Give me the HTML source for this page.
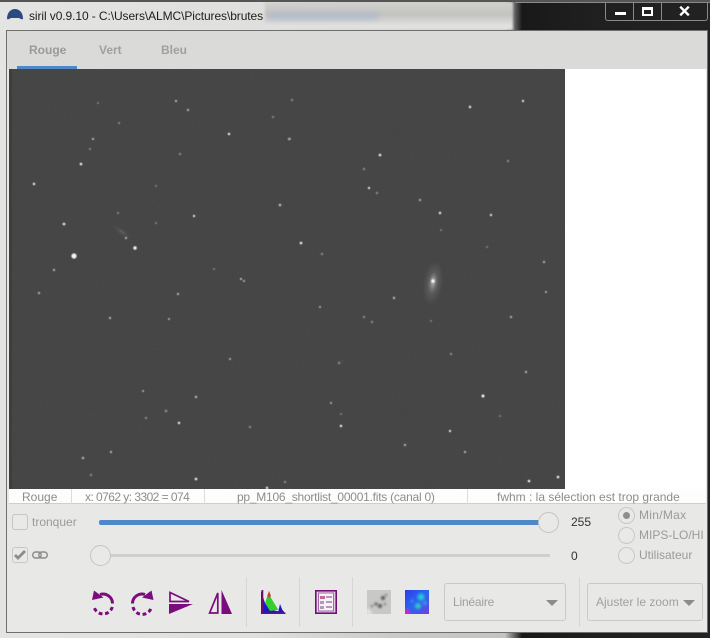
<!DOCTYPE html>
<html><head><meta charset="utf-8"><style>
html,body{margin:0;padding:0;width:710px;height:638px;overflow:hidden;background:#1c1c1c}
*{box-sizing:border-box}
.a{position:absolute}
body{font-family:"Liberation Sans",sans-serif;position:relative}
.t{position:absolute;white-space:nowrap;line-height:14px}
.st{font-size:12px;color:#8d8d8d;top:490px}
.sep{position:absolute;width:1px;top:577px;height:50px;background:#d6d6d5}
.dd{position:absolute;top:583px;height:38px;border:1px solid #c9c9c8;border-radius:3px;background:#e8e8e7}
.arrow{position:absolute;width:0;height:0;border-left:6px solid transparent;border-right:6px solid transparent;border-top:6px solid #8c8c8c;top:16px}
.radio{position:absolute;left:618px;width:17px;height:17px;border:1px solid #c8c8c7;border-radius:50%;background:#e9e9e8}
.knob{position:absolute;width:21px;height:21px;border:1px solid #c4c4c3;border-radius:50%;background:#e9e9e8}
.cb{position:absolute;left:12px;width:16px;height:16px;border:1px solid #c6c6c5;border-radius:3px;background:#e9e9e8}
</style></head><body>
<!-- title bar -->
<div class="a" style="left:0;top:0;width:710px;height:638px;background:linear-gradient(90deg,#e4e4e2 0,#dfdfdd 260px,#c9c9c6 400px,#c4c4c1 505px,#191919 522px,#202020 600px,#222 710px)"></div>
<div class="a" style="left:265px;top:2px;width:248px;height:28px;background:linear-gradient(180deg,#d2d2cf,#c2c2bf 45%,#e2e2df 85%,#ddd);filter:blur(1px)"></div>
<div class="a" style="left:268px;top:13px;width:110px;height:6px;background:#a8b8d0;filter:blur(3px);opacity:.8"></div>
<div class="a" style="left:0;top:0;width:710px;height:2px;background:#555"></div>
<div class="a" style="left:515px;top:2px;width:195px;height:1px;background:#8a8a8a"></div>
<svg class="a" style="left:7px;top:8px" width="16" height="13" viewBox="0 0 16 13"><path d="M0 11C0 4 4 1 8 1s8 3 8 10c-2 1-3-1-4-1H4c-1 0-2 2-4 1z" fill="#2b4a80"/></svg>
<div class="t" style="left:29px;top:9px;font-size:12px;letter-spacing:-.09px;color:#1d1d1d">siril v0.9.10 - C:\Users\ALMC\Pictures\brutes</div>
<!-- window buttons -->
<div class="a" style="left:605px;top:2px;width:103px;height:19px;border:1px solid #8a8a8a;border-top:0;border-radius:0 0 3px 3px"></div>
<div class="a" style="left:633px;top:2px;width:1px;height:18px;background:#8a8a8a"></div>
<div class="a" style="left:661px;top:2px;width:1px;height:18px;background:#8a8a8a"></div>
<div class="a" style="left:615px;top:12px;width:11px;height:3px;background:#fff"></div>
<div class="a" style="left:642px;top:7px;width:11px;height:9px;border:2px solid #fff;border-top-width:3px"></div>
<svg class="a" style="left:679px;top:6px" width="11" height="10" viewBox="0 0 11 10"><path d="M1.200 .7L9.800 9.300M9.800 .7L1.200 9.300" stroke="#fff" stroke-width="2.400"/></svg>
<!-- client -->
<div class="a" style="left:6px;top:30px;width:702px;height:603px;border:1px solid #6f6f6f;background:#e8e8e7"></div>
<div class="a" style="left:7px;top:31px;width:700px;height:38px;background:#dadad8"></div>
<div class="t" style="left:29px;top:43px;font-size:12px;font-weight:bold;color:#9a9a9a">Rouge</div>
<div class="t" style="left:99px;top:43px;font-size:12px;font-weight:bold;color:#a0a0a0">Vert</div>
<div class="t" style="left:161px;top:43px;font-size:12px;font-weight:bold;color:#a0a0a0">Bleu</div>
<div class="a" style="left:17px;top:66px;width:60px;height:3px;background:#4f88c6"></div>
<div class="a" style="left:9px;top:69px;width:697px;height:420px;background:#fff"></div>
<!-- image -->
<svg class="a" style="left:9px;top:69px" width="556" height="420" viewBox="9 69 556 420">
<defs>
<radialGradient id="g"><stop offset="0" stop-color="#fff" stop-opacity=".4"/><stop offset=".5" stop-color="#fff" stop-opacity=".1"/><stop offset="1" stop-color="#fff" stop-opacity="0"/></radialGradient>
<filter id="n" x="0" y="0" width="100%" height="100%"><feTurbulence type="fractalNoise" baseFrequency=".5" numOctaves="2" seed="4"/><feColorMatrix values="0 0 0 0 .5 0 0 0 0 .5 0 0 0 0 .5 0 0 0 .05 0"/></filter>
<filter id="s" x="-5%" y="-5%" width="110%" height="110%"><feGaussianBlur stdDeviation=".5"/></filter>
</defs>
<rect x="9" y="69" width="556" height="420" fill="#434343"/>
<rect x="9" y="69" width="556" height="420" filter="url(#n)"/>
<rect x="9" y="69" width="3" height="420" fill="#3e3e3e"/>
<ellipse cx="433" cy="283" rx="10" ry="22" fill="url(#g)" transform="rotate(8 433 283)"/>
<ellipse cx="433" cy="281" rx="4" ry="9" fill="url(#g)" transform="rotate(8 433 281)"/>
<ellipse cx="122" cy="232" rx="12" ry="3.500" fill="url(#g)" opacity=".35" transform="rotate(35 122 232)"/>
<ellipse cx="341" cy="362" rx="5" ry="2" fill="url(#g)" opacity=".2" transform="rotate(-35 341 362)"/>
<g filter="url(#s)">
<g fill="#8a8a8a">
<circle cx="98" cy="103" r="1"/><circle cx="119" cy="123" r="1.100"/><circle cx="273" cy="117" r="1.100"/><circle cx="90" cy="149" r="1.100"/><circle cx="180" cy="154" r="1.200"/><circle cx="118" cy="213" r="1.100"/><circle cx="156" cy="223" r="1"/><circle cx="214" cy="269" r="1"/><circle cx="156" cy="186" r="1"/><circle cx="292" cy="100" r="1.200"/><circle cx="508" cy="161" r="1.200"/><circle cx="364" cy="169" r="1.200"/><circle cx="377" cy="193" r="1.200"/><circle cx="322" cy="254" r="1.200"/><circle cx="487" cy="247" r="1"/><circle cx="441" cy="230" r="1"/><circle cx="250" cy="427" r="1.200"/><circle cx="146" cy="418" r="1.200"/><circle cx="91" cy="475" r="1.200"/><circle cx="364" cy="317" r="1.200"/><circle cx="372" cy="322" r="1.200"/><circle cx="431" cy="321" r="1"/><circle cx="451" cy="354" r="1.200"/><circle cx="339" cy="363" r="1.200"/><circle cx="341" cy="414" r="1"/><circle cx="500" cy="416" r="1"/><circle cx="166" cy="411" r="1.400"/><circle cx="285" cy="482" r="1.200"/><circle cx="290" cy="139" r="1.200"/>
</g>
<g fill="#bdbdbd">
<circle cx="176" cy="101" r="1.100"/><circle cx="188" cy="110" r="1.100"/><circle cx="289" cy="139" r="1.100"/><circle cx="93" cy="139" r="1.100"/><circle cx="280" cy="205" r="1.300"/><circle cx="126" cy="238" r="1.100"/><circle cx="54" cy="270" r="1.100"/><circle cx="241" cy="279" r="1.100"/><circle cx="420" cy="200" r="1.100"/><circle cx="544" cy="262" r="1.100"/><circle cx="39" cy="293" r="1.100"/><circle cx="178" cy="294" r="1.100"/><circle cx="244" cy="281" r="1"/><circle cx="110" cy="318" r="1.100"/><circle cx="169" cy="319" r="1"/><circle cx="230" cy="359" r="1"/><circle cx="143" cy="391" r="1"/><circle cx="196" cy="397" r="1.200"/><circle cx="111" cy="452" r="1.100"/><circle cx="83" cy="458" r="1.200"/><circle cx="394" cy="298" r="1.200"/><circle cx="320" cy="307" r="1"/><circle cx="546" cy="292" r="1"/><circle cx="511" cy="317" r="1.100"/><circle cx="526" cy="372" r="1.100"/><circle cx="331" cy="403" r="1"/><circle cx="405" cy="445" r="1.100"/><circle cx="465" cy="452" r="1.100"/>
</g>
<g fill="#f4f4f4">
<circle cx="229" cy="134" r="1.200"/><circle cx="81" cy="164" r="1.300"/><circle cx="34" cy="184" r="1.200"/><circle cx="194" cy="216" r="1.100"/><circle cx="64" cy="224" r="1.300"/><circle cx="135" cy="248" r="1.700"/><circle cx="74" cy="256" r="2.600"/><circle cx="470" cy="107" r="1.200"/><circle cx="523" cy="101" r="1.100"/><circle cx="380" cy="155" r="1.300"/><circle cx="369" cy="188" r="1.100"/><circle cx="440" cy="213" r="1.200"/><circle cx="491" cy="215" r="1.100"/><circle cx="301" cy="243" r="1.300"/><circle cx="179" cy="423" r="1.200"/><circle cx="196" cy="479" r="1.300"/><circle cx="267" cy="488" r="1.200"/><circle cx="483" cy="396" r="1.500"/><circle cx="341" cy="426" r="1.200"/><circle cx="450" cy="431" r="1.100"/><circle cx="529" cy="481" r="1.300"/><circle cx="558" cy="477" r="1.300"/><circle cx="433" cy="281" r="1.800"/>
</g>
</g>
</svg>
<!-- status -->
<div class="a" style="left:9px;top:489px;width:697px;height:15px;background:#fdfdfc;border-bottom:1px solid #cfcfce"></div>
<div class="a" style="left:71px;top:489px;width:1px;height:15px;background:#dcdcdb"></div>
<div class="a" style="left:204px;top:489px;width:1px;height:15px;background:#dcdcdb"></div>
<div class="a" style="left:467px;top:489px;width:1px;height:15px;background:#dcdcdb"></div>
<div class="t st" style="left:22px">Rouge</div>
<div class="t st" style="left:85px;letter-spacing:-.55px">x: 0762 y: 3302 = 074</div>
<div class="t st" style="left:237px;letter-spacing:-.24px">pp_M106_shortlist_00001.fits (canal 0)</div>
<div class="t st" style="left:497px">fwhm : la sélection est trop grande</div>
<!-- row 1 -->
<div class="cb" style="top:514px"></div>
<div class="t" style="left:32px;top:515px;font-size:12px;color:#9a9a9a">tronquer</div>
<div class="a" style="left:99px;top:520px;width:445px;height:5px;border-radius:2px;background:#4f88c8"></div>
<div class="knob" style="left:538px;top:512px"></div>
<div class="t" style="left:571px;top:515px;font-size:12px;color:#333">255</div>
<!-- row 2 -->
<div class="cb" style="top:547px"></div>
<svg class="a" style="left:13px;top:549px" width="14" height="12" viewBox="0 0 14 12"><path d="M2 6l3 3 7-7" fill="none" stroke="#8c8c8c" stroke-width="2.800"/></svg>
<svg class="a" style="left:32px;top:551px" width="16" height="8" viewBox="0 0 16 8"><rect x=".7" y="1" width="8.500" height="6" rx="3" fill="none" stroke="#8a8a8a" stroke-width="1.400"/><rect x="6.800" y="1" width="8.500" height="6" rx="3" fill="none" stroke="#8a8a8a" stroke-width="1.400"/></svg>
<div class="a" style="left:105px;top:554px;width:445px;height:3px;border-radius:1px;background:#cfcfce"></div>
<div class="knob" style="left:90px;top:545px"></div>
<div class="t" style="left:571px;top:549px;font-size:12px;color:#333">0</div>
<!-- radios -->
<div class="radio" style="top:507px"></div>
<div class="a" style="left:623px;top:512px;width:7px;height:7px;border-radius:50%;background:#8f8f8f"></div>
<div class="radio" style="top:527px"></div>
<div class="radio" style="top:547px"></div>
<div class="t" style="left:639px;top:508px;font-size:12px;letter-spacing:.3px;color:#9a9a9a">Min/Max</div>
<div class="t" style="left:639px;top:528px;font-size:12px;color:#9a9a9a">MIPS-LO/HI</div>
<div class="t" style="left:639px;top:548px;font-size:12px;color:#9a9a9a">Utilisateur</div>
<!-- separators -->
<div class="sep" style="left:246px"></div><div class="sep" style="left:299px"></div><div class="sep" style="left:352px"></div><div class="sep" style="left:579px"></div>
<!-- toolbar icons -->
<svg class="a" style="left:88px;top:586px" width="150" height="32" viewBox="88 586 150 32">
<g fill="#7a0c7e" stroke="none">
<path d="M94 590.500l-2 9.500 11.500-2.500z"/>
<path d="M151.500 590.500l2 9.500-11.500-2.500z"/>
<path d="M169 604h24l-24 10z"/>
<path d="M221.500 590l10.500 24h-10.500z"/>
</g>
<g fill="none" stroke="#7a0c7e" stroke-width="3">
<path d="M100 594.500A9.500 9.500 0 0 1 112.500 603.500"/>
<path d="M112.300 607A9.500 9.500 0 0 1 94 607" stroke-dasharray="3.800 2.700"/>
<path d="M145 594.500A9.500 9.500 0 0 0 132.500 603.500"/>
<path d="M133 607A9.500 9.500 0 0 0 151.500 607" stroke-dasharray="3.800 2.700"/>
</g>
<g fill="none" stroke="#7a0c7e" stroke-width="1.700">
<path d="M170 592.500v9h19z"/>
<path d="M217.800 593v20h-8.200z"/>
</g>
</svg>
<!-- histogram -->
<svg class="a" style="left:260px;top:589px" width="26" height="26" viewBox="0 0 26 26">
<path d="M1 1.700L5 14l5 6.700 8.300 1.600L20 15l2.300 5.700L25 24v1H1z" fill="#1d16c9"/>
<path d="M5 14l3.300-10L13 12.300l5.300 8.400L10 22z" fill="#35d02f"/>
<path d="M7.300 7L9 1.700 11 7 9 9z" fill="#c8442a"/>
<path d="M1.500 1h1.800v24H1.500zM1.500 23.500h24V25h-24z" fill="#6e0f78"/>
</svg>
<!-- list -->
<svg class="a" style="left:315px;top:590px" width="22" height="24" viewBox="0 0 22 24">
<rect x=".8" y=".8" width="20.400" height="22.400" fill="#e4cfe4" stroke="#6e0f78" stroke-width="1.600"/>
<rect x="3.500" y="3" width="15" height="18" fill="#f6f2f6" stroke="#a16aa6"/>
<rect x="5" y="6" width="5" height="3" fill="#c06a90"/><rect x="5" y="11" width="4" height="3" fill="#b59ab8"/><rect x="5" y="16" width="4" height="3" fill="#b59ab8"/>
<path d="M11 7h6M11 12h6M11 17h6" stroke="#7a3a80"/>
</svg>
<!-- gray image icon -->
<svg class="a" style="left:367px;top:590px" width="24" height="24" viewBox="0 0 24 24">
<defs><filter id="b1"><feGaussianBlur stdDeviation="1"/></filter></defs>
<rect width="24" height="24" fill="#c8c8c7"/>
<g filter="url(#b1)" fill="#555"><circle cx="16" cy="8" r="2"/><circle cx="9" cy="14" r="1.500"/><circle cx="13" cy="16" r="2"/><circle cx="5" cy="16" r="1"/><circle cx="19" cy="5" r="1"/><circle cx="18" cy="14" r="1"/></g>
<path d="M0 17l6 7H0z" fill="#e6e6e5" filter="url(#b1)"/>
</svg>
<!-- colour image icon -->
<svg class="a" style="left:405px;top:590px" width="24" height="24" viewBox="0 0 24 24">
<defs><linearGradient id="c1" x1="1" y1="1" x2="0" y2="0"><stop offset="0" stop-color="#6d3fe0"/><stop offset=".5" stop-color="#2b66f0"/><stop offset="1" stop-color="#2d3ee8"/></linearGradient><filter id="b2"><feGaussianBlur stdDeviation="1.200"/></filter></defs>
<rect width="24" height="24" fill="url(#c1)"/>
<g filter="url(#b2)"><circle cx="16" cy="7" r="3.500" fill="#25c8d8"/><circle cx="13" cy="16" r="3" fill="#30c8c8"/><circle cx="20" cy="13" r="2" fill="#30a0e8"/><circle cx="1" cy="23" r="4" fill="#d020d0"/><circle cx="7" cy="11" r="1.500" fill="#30a0e8"/></g>
</svg>
<!-- dropdowns -->
<div class="dd" style="left:444px;width:122px"><div class="arrow" style="left:101px"></div></div>
<div class="t" style="left:453px;top:595px;font-size:12px;letter-spacing:-.2px;color:#a0a0a0">Linéaire</div>
<div class="dd" style="left:587px;width:116px"><div class="arrow" style="left:95px"></div></div>
<div class="t" style="left:596px;top:595px;font-size:12px;color:#a0a0a0">Ajuster le zoom</div>
</body></html>
